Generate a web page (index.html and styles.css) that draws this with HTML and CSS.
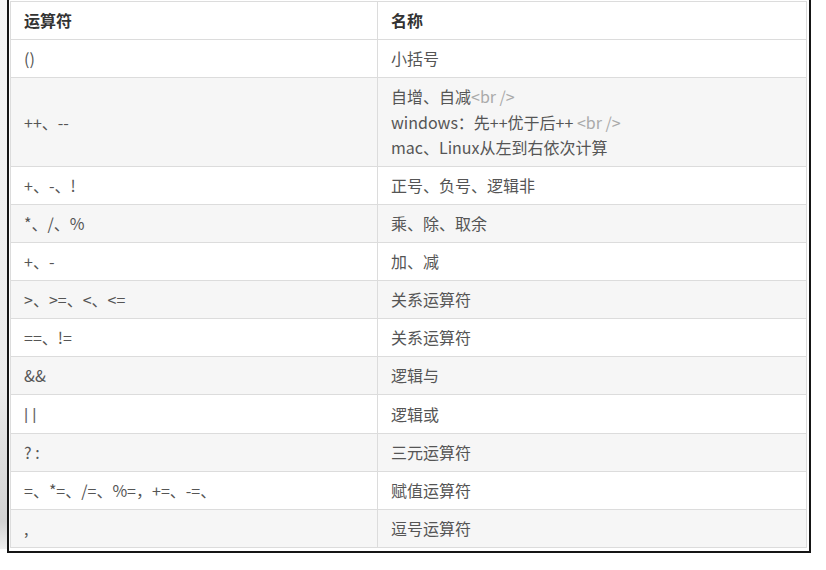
FILE: index.html
```html
<!DOCTYPE html>
<html lang="zh-CN">
<head>
<meta charset="utf-8">
<title>运算符优先级</title>
<link rel="stylesheet" href="styles.css">
</head>
<body>
<div class="page">
  <div class="side"></div>
  <div class="frame">
    <table class="ops">
      <thead>
        <tr><th class="c1">运算符</th><th>名称</th></tr>
      </thead>
      <tbody>
        <tr><td>()</td><td>小括号</td></tr>
        <tr><td>++、--</td><td>自增、自减<span class="tag">&lt;br /&gt;</span><br>windows：先++优于后++ <span class="tag">&lt;br /&gt;</span><br>mac、Linux从左到右依次计算</td></tr>
        <tr><td>+、-、!</td><td>正号、负号、逻辑非</td></tr>
        <tr><td>*、/、%</td><td>乘、除、取余</td></tr>
        <tr><td>+、-</td><td>加、减</td></tr>
        <tr><td>&gt;、&gt;=、&lt;、&lt;=</td><td>关系运算符</td></tr>
        <tr><td>==、!=</td><td>关系运算符</td></tr>
        <tr><td>&amp;&amp;</td><td>逻辑与</td></tr>
        <tr><td><span class="bars">||</span></td><td>逻辑或</td></tr>
        <tr><td>? :</td><td>三元运算符</td></tr>
        <tr><td>=、*=、/=、%=，+=、-=、</td><td>赋值运算符</td></tr>
        <tr><td>,</td><td>逗号运算符</td></tr>
      </tbody>
    </table>
  </div>
</div>
</body>
</html>
```
FILE: styles.css
```css
html, body {
  margin: 0;
  padding: 0;
  background: #fff;
}
.page {
  display: flex;
  align-items: flex-start;
}
.side {
  width: 7px;
  height: 549px;
  background: linear-gradient(to bottom, #f6f6f6 0%, #ececec 70%, #d2d2d2 95%, #efefef 100%);
}
.frame {
  width: 797px;
  border: 2px solid #151515;
  border-top: none;
  padding: 1px 2px 3px 1px;
  background: #fff;
}
.ops {
  width: 797px;
  border-collapse: collapse;
  font-family: "Noto Sans CJK SC", "Liberation Sans", sans-serif;
  font-size: 16px;
  color: #555;
}
.ops th, .ops td {
  border: 1px solid #dcdcdc;
  padding: 6px 13px 5.5px;
  line-height: 25.5px;
  text-align: left;
  vertical-align: middle;
}
.ops th {
  font-weight: bold;
  color: #333;
}
.ops .c1 {
  width: 340px;
}
.ops tbody tr:nth-child(even) {
  background: #f6f6f6;
}
.tag {
  color: #aaa;
}
.bars {
  color: #666;
  font-family: "Liberation Sans", sans-serif;
  letter-spacing: 4px;
}
```
